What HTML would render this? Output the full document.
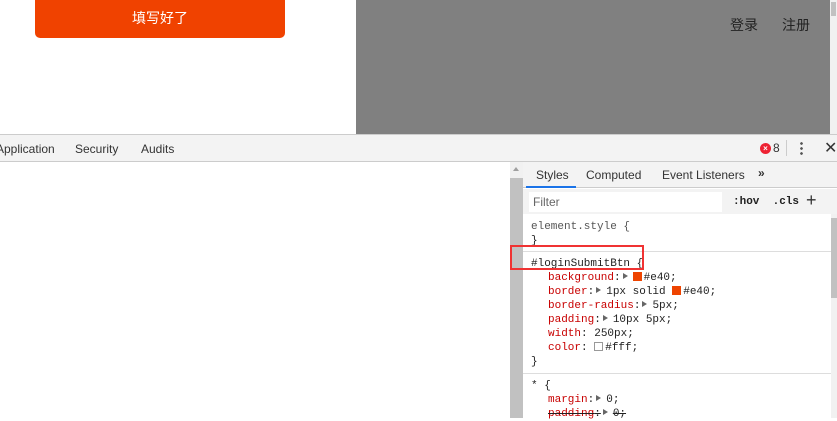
<!DOCTYPE html>
<html><head><meta charset="utf-8"><style>
*{margin:0;padding:0;box-sizing:border-box}
body{width:837px;height:418px;overflow:hidden;position:relative;background:#fff;font-family:"Liberation Sans","Noto Sans CJK SC",sans-serif}
.a{position:absolute}
.mono{font-family:"Liberation Mono","DejaVu Sans Mono",monospace;font-size:11px;color:#222;white-space:pre;line-height:14px}
.mono div.i{padding-left:17px}
.p{color:#c80000}
.sw{display:inline-block;width:9px;height:9px;background:#e40;vertical-align:-1px;margin-right:2px}
.tri{display:inline-block;width:0;height:0;border-left:5px solid #666;border-top:3px solid transparent;border-bottom:3px solid transparent;margin:0 5px 0 2px;vertical-align:1px}
.t{font-size:12px;color:#333}
</style></head><body>
<div class="a" style="left:35px;top:0;width:250px;height:38px;background:#f04200;border-radius:0 0 5px 5px;color:#fff;font-size:14px;text-align:center;line-height:36px">填写好了</div>
<div class="a" style="left:356px;top:0;width:474px;height:134px;background:#808080"></div>
<div class="a" style="left:730px;top:15px;font-size:14px;color:#222">登录</div>
<div class="a" style="left:782px;top:15px;font-size:14px;color:#222">注册</div>
<div class="a" style="left:830px;top:0;width:7px;height:134px;background:#f1f1f1"></div>
<div class="a" style="left:831px;top:2px;width:5px;height:14px;background:#c1c1c1"></div>
<div class="a" style="left:0;top:134px;width:837px;height:28px;background:#f3f3f3;border-top:1px solid #ccc;border-bottom:1px solid #ccc"></div>
<div class="a t" style="left:-4px;top:142px">Application</div>
<div class="a t" style="left:75px;top:142px">Security</div>
<div class="a t" style="left:141px;top:142px">Audits</div>
<div class="a" style="left:760px;top:143px;width:11px;height:11px;border-radius:50%;background:#e23;color:#fff;font-size:8px;line-height:11px;text-align:center;font-weight:bold">×</div>
<div class="a t" style="left:773px;top:141px">8</div>
<div class="a" style="left:786px;top:140px;width:1px;height:16px;background:#ccc"></div>
<div class="a" style="left:800px;top:141px;width:3px;height:15px;background:radial-gradient(circle,#555 1.2px,transparent 1.5px) 0 0/3px 5px"></div>
<div class="a" style="left:824px;top:138px;font-size:16px;color:#333">✕</div>
<div class="a" style="left:510px;top:162px;width:13px;height:256px;background:#c1c1c1"></div>
<div class="a" style="left:510px;top:162px;width:13px;height:16px;background:#f1f1f1"></div>
<div class="a" style="left:513px;top:167px;border-left:3.5px solid transparent;border-right:3.5px solid transparent;border-bottom:4px solid #a0a0a0"></div>
<div class="a" style="left:523px;top:162px;width:314px;height:26px;background:#f3f3f3;border-bottom:1px solid #ccc"></div>
<div class="a t" style="left:536px;top:168px">Styles</div>
<div class="a" style="left:526px;top:186px;width:50px;height:2px;background:#1a73e8"></div>
<div class="a t" style="left:586px;top:168px">Computed</div>
<div class="a t" style="left:662px;top:168px">Event Listeners</div>
<div class="a t" style="left:758px;top:166px;font-weight:bold">»</div>
<div class="a" style="left:523px;top:189px;width:314px;height:25px;background:#f3f3f3"></div>
<div class="a" style="left:529px;top:192px;width:193px;height:20px;background:#fff;font-size:12px;color:#666;padding:3px 4px">Filter</div>
<div class="a mono" style="left:733px;top:195px;font-weight:bold">:hov  .cls</div>
<div class="a" style="left:806px;top:190px;font-size:18px;color:#333">+</div>
<div class="a" style="left:831px;top:214px;width:6px;height:204px;background:#f1f1f1"></div>
<div class="a" style="left:831px;top:218px;width:6px;height:80px;background:#c1c1c1"></div>
<div class="a mono" style="left:531px;top:220px"><div style="color:#555">element.style {</div><div>}</div></div>
<div class="a" style="left:523px;top:251px;width:308px;height:1px;background:#ddd"></div>
<div class="a mono" style="left:531px;top:257px"><div>#loginSubmitBtn {</div><div class="i"><span class="p">background</span>:<span class="tri"></span><span class="sw"></span>#e40;</div><div class="i"><span class="p">border</span>:<span class="tri"></span>1px solid <span class="sw"></span>#e40;</div><div class="i"><span class="p">border-radius</span>:<span class="tri"></span>5px;</div><div class="i"><span class="p">padding</span>:<span class="tri"></span>10px 5px;</div><div class="i"><span class="p">width</span>: 250px;</div><div class="i"><span class="p">color</span>: <span class="sw" style="background:#fff;border:1px solid #999"></span>#fff;</div><div>}</div></div>
<div class="a" style="left:523px;top:373px;width:308px;height:1px;background:#ddd"></div>
<div class="a mono" style="left:531px;top:379px"><div>* {</div><div class="i"><span class="p">margin</span>:<span class="tri"></span>0;</div><div class="i"><span style="text-decoration:line-through"><span class="p">padding</span>:<span class="tri"></span>0;</span></div></div>
<div class="a" style="left:510px;top:245px;width:134px;height:25px;border:2px solid #f03333"></div>
</body></html>
